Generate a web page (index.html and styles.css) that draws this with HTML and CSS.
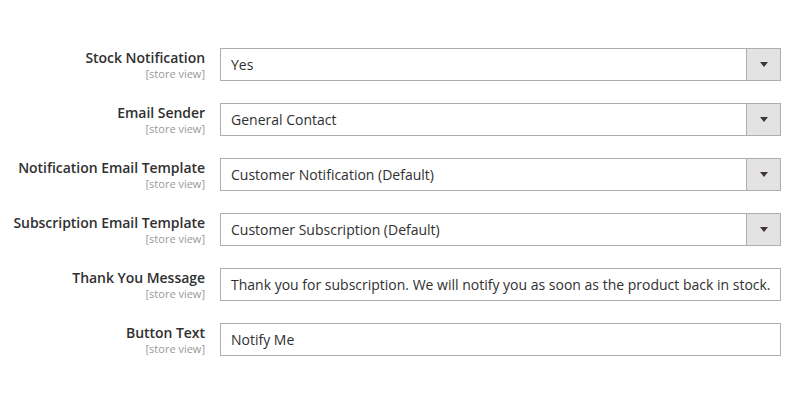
FILE: index.html
```html
<!DOCTYPE html>
<html>
<head>
<meta charset="utf-8">
<link rel="stylesheet" href="styles.css">
</head>
<body>
<div class="form">
  <div class="row">
    <div class="label"><span class="title">Stock Notification</span><span class="scope">[store view]</span></div>
    <div class="control select"><span class="value">Yes</span><span class="arrow"></span></div>
  </div>
  <div class="row">
    <div class="label"><span class="title">Email Sender</span><span class="scope">[store view]</span></div>
    <div class="control select"><span class="value">General Contact</span><span class="arrow"></span></div>
  </div>
  <div class="row">
    <div class="label"><span class="title">Notification Email Template</span><span class="scope">[store view]</span></div>
    <div class="control select"><span class="value">Customer Notification (Default)</span><span class="arrow"></span></div>
  </div>
  <div class="row">
    <div class="label"><span class="title">Subscription Email Template</span><span class="scope">[store view]</span></div>
    <div class="control select"><span class="value">Customer Subscription (Default)</span><span class="arrow"></span></div>
  </div>
  <div class="row">
    <div class="label"><span class="title">Thank You Message</span><span class="scope">[store view]</span></div>
    <div class="control"><span class="value">Thank you for subscription. We will notify you as soon as the product back in stock.</span></div>
  </div>
  <div class="row">
    <div class="label"><span class="title">Button Text</span><span class="scope">[store view]</span></div>
    <div class="control"><span class="value">Notify Me</span></div>
  </div>
</div>
</body>
</html>
```
FILE: styles.css
```css
html, body {
  margin: 0;
  padding: 0;
  background: #ffffff;
}
body {
  font-family: "Open Sans", "Liberation Sans", sans-serif;
  color: #303030;
}
.form {
  display: flex;
  flex-direction: column;
  gap: 22px;
  padding: 48px 12px 0 0;
}
.row {
  display: flex;
  align-items: flex-start;
  gap: 15px;
}
.label {
  width: 205px;
  display: flex;
  flex-direction: column;
  align-items: flex-end;
  text-align: right;
  padding-top: 1px;
}
.title {
  font-size: 14px;
  font-weight: 600;
  line-height: 18px;
  letter-spacing: -0.04px;
  color: #303030;
}
.scope {
  font-size: 11px;
  line-height: 13px;
  color: #999999;
}
.control {
  flex: 1;
  height: 33px;
  box-sizing: border-box;
  border: 1px solid #adadad;
  background: #ffffff;
  display: flex;
  align-items: center;
  padding-left: 10px;
  font-size: 14px;
  color: #303030;
  overflow: hidden;
  white-space: nowrap;
}
.control .value {
  flex: 1;
}
.select .arrow {
  align-self: stretch;
  width: 33px;
  border-left: 1px solid #adadad;
  background: #e3e3e3;
  display: flex;
  align-items: center;
  justify-content: center;
}
.select .arrow::after {
  content: "";
  width: 0;
  height: 0;
  border-left: 4px solid transparent;
  border-right: 4px solid transparent;
  border-top: 5px solid #41362f;
}
```
